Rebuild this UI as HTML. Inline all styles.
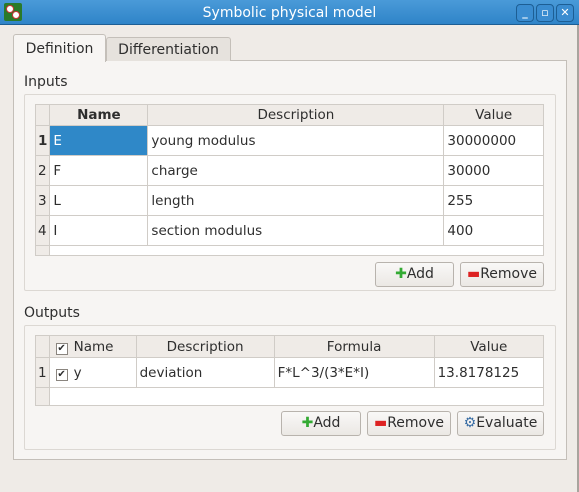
<!DOCTYPE html>
<html><head><style>
*{box-sizing:border-box;margin:0;padding:0}
body{width:579px;height:492px;background:#efebe7;font-family:"DejaVu Sans","Liberation Sans",sans-serif;font-size:13.5px;color:#2e2e2e;position:relative;overflow:hidden}
.abs{position:absolute}
.title{left:0;top:0;width:579px;height:25px;background:linear-gradient(#4a9ad8,#2f84c8);border-bottom:1px solid #1d5e94;color:#fff;text-align:center;line-height:26px;font-size:14px}
.wb{top:4px;width:18px;height:18px;border:1px solid #1d5e94;border-radius:4px;background:#3a8cd0;color:#fff;font-size:11px;line-height:16px;text-align:center;font-weight:bold}
.pane{left:13px;top:60px;width:554px;height:400px;border:1px solid #c4bfb9;background:#f7f5f3}
.tab{border:1px solid #c4bfb9;border-bottom:none;border-radius:3px 3px 0 0;text-align:center}
.grp{border:1px solid #dcd8d3;border-radius:2px;background:#f7f5f3}
table{border-collapse:collapse;background:#fff;position:absolute}
td,th{border:1px solid #d0ccc7;padding:0 3px;text-align:left;font-weight:normal;white-space:nowrap}
th{background:#efebe7;text-align:center}
td.rh{background:#efebe7;padding:0 2px;text-align:left}
.btn{position:absolute;height:25px;border:1px solid #b8b3ad;border-radius:3px;background:linear-gradient(#f9f8f7,#ebe8e4);text-align:center;line-height:23px;font-size:14px}
.cb{display:inline-block;width:12px;height:12px;border:1px solid #8a857f;background:#fff;font-size:10px;line-height:10px;text-align:center;vertical-align:0px;margin-right:6px}
</style></head><body>
<div class="abs title">Symbolic physical model</div>
<div class="abs" style="left:4px;top:3px;width:18px;height:18px;background:#2a7a2a;border-radius:2px"><div class="abs" style="left:2px;top:2px;width:8px;height:8px;border-radius:50%;background:#fff;border:1px solid #c33"></div><div class="abs" style="left:8px;top:8px;width:8px;height:8px;border-radius:50%;background:#fff;border:1px solid #c33"></div></div>
<div class="abs wb" style="left:516px">_</div>
<div class="abs wb" style="left:536px">▫</div>
<div class="abs wb" style="left:556px">✕</div>
<div class="abs" style="left:577px;top:25px;width:2px;height:467px;background:#a9a49e"></div>
<div class="abs pane"></div>
<div class="abs tab" style="left:106px;top:37px;width:125px;height:24px;background:#e6e2dd;line-height:25px;font-size:14px">Differentiation</div>
<div class="abs tab" style="left:13px;top:34px;width:93px;height:28px;background:#f7f5f3;line-height:28px;font-size:14px">Definition</div>
<div class="abs" style="left:24px;top:74px;font-size:14px">Inputs</div>
<div class="abs grp" style="left:24px;top:94px;width:532px;height:197px"></div>
<table style="left:35px;top:104px;width:509px">
<tr style="height:21px"><th style="width:13px"></th><th style="width:98px;font-weight:bold">Name</th><th style="width:296px">Description</th><th>Value</th></tr>
<tr style="height:30px"><td class="rh"><b>1</b></td><td style="background:#2f88c8;color:#fff">E</td><td>young modulus</td><td>30000000</td></tr>
<tr style="height:30px"><td class="rh">2</td><td>F</td><td>charge</td><td>30000</td></tr>
<tr style="height:30px"><td class="rh">3</td><td>L</td><td>length</td><td>255</td></tr>
<tr style="height:30px"><td class="rh">4</td><td>I</td><td>section modulus</td><td>400</td></tr>
<tr style="height:10px"><td class="rh"></td><td colspan="3"></td></tr>
</table>
<div class="btn" style="left:375px;top:262px;width:79px"><span style="color:#3a3;font-weight:bold">✚</span>Add</div>
<div class="btn" style="left:460px;top:262px;width:84px"><span style="color:#d22;font-weight:bold">▬</span>Remove</div>
<div class="abs" style="left:24px;top:305px;font-size:14px">Outputs</div>
<div class="abs grp" style="left:24px;top:325px;width:532px;height:125px"></div>
<table style="left:35px;top:335px;width:509px">
<tr style="height:22px"><th style="width:13px"></th><th style="width:87px;text-align:left;padding-left:6px"><span class="cb">✔</span>Name</th><th style="width:138px">Description</th><th style="width:160px">Formula</th><th>Value</th></tr>
<tr style="height:30px"><td class="rh">1</td><td style="padding-left:6px"><span class="cb">✔</span>y</td><td>deviation</td><td>F*L^3/(3*E*I)</td><td>13.8178125</td></tr>
<tr style="height:18px"><td class="rh"></td><td colspan="4"></td></tr>
</table>
<div class="btn" style="left:281px;top:411px;width:80px"><span style="color:#3a3;font-weight:bold">✚</span>Add</div>
<div class="btn" style="left:367px;top:411px;width:84px"><span style="color:#d22;font-weight:bold">▬</span>Remove</div>
<div class="btn" style="left:457px;top:411px;width:87px"><span style="color:#3a6ea5">⚙</span>Evaluate</div>
</body></html>
